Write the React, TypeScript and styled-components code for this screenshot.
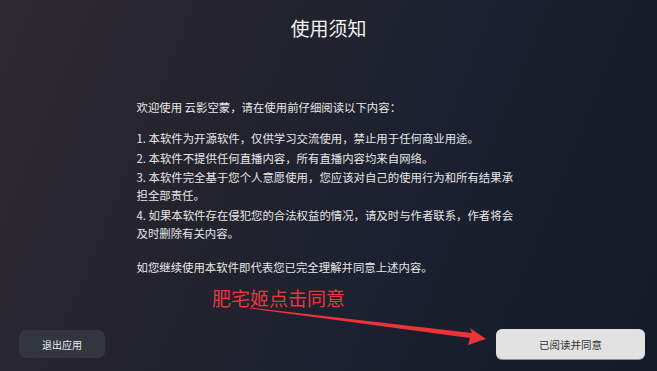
import styled, { createGlobalStyle } from "styled-components";

const GlobalStyle = createGlobalStyle`
  html, body {
    margin: 0;
    padding: 0;
    width: 100%;
    height: 100%;
    overflow: hidden;
  }
  body {
    font-family: "Noto Sans CJK SC", "Noto Sans", sans-serif;
  }
`;

const Screen = styled.div`
  position: relative;
  width: 657px;
  height: 371px;
  display: flex;
  flex-direction: column;
  align-items: center;
  background: linear-gradient(112deg, #2f2a31 0%, #23232d 35%, #1c2030 60%, #131b27 100%);
  overflow: hidden;
`;

const Title = styled.h1`
  margin: 15px 0 0;
  font-size: 19px;
  line-height: 26px;
  font-weight: 400;
  color: #f2f2f2;
`;

const Notice = styled.div`
  width: 384px;
  margin-top: 57px;
  font-size: 11.4px;
  line-height: 18px;
  color: #e6e6e6;
`;

const Paragraph = styled.p<{ $before?: number; $after?: number }>`
  margin: ${(p) => p.$before ?? 0}px 0 ${(p) => p.$after ?? 0}px;
`;

const Item = styled.p`
  margin: 0 0 1.5px;
`;

const Footer = styled.div`
  margin-top: auto;
  align-self: stretch;
  display: flex;
  justify-content: space-between;
  align-items: center;
  padding: 0 12px 12px 19px;
`;

const Button = styled.button<{ $primary?: boolean }>`
  border: none;
  font-family: inherit;
  display: flex;
  align-items: center;
  justify-content: center;
  width: ${(p) => (p.$primary ? 149 : 86)}px;
  height: ${(p) => (p.$primary ? 30 : 28)}px;
  border-radius: ${(p) => (p.$primary ? 6 : 7)}px;
  font-size: ${(p) => (p.$primary ? 10.5 : 10)}px;
  background: ${(p) => (p.$primary ? "#e2e2e2" : "#33363e")};
  color: ${(p) => (p.$primary ? "#333" : "#ececec")};
  box-shadow: ${(p) => (p.$primary ? "0 1px 0 #8a8d93" : "none")};
`;

const Annotation = styled.div`
  position: absolute;
  left: 212px;
  top: 286px;
  font-size: 19px;
  line-height: 24px;
  color: #e8383b;
`;

const ArrowLayer = styled.svg`
  position: absolute;
  left: 0;
  top: 0;
  pointer-events: none;
`;

export default function App() {
  return (
    <>
      <GlobalStyle />
      <Screen>
        <Title>使用须知</Title>
        <Notice>
          <Paragraph $after={13}>欢迎使用 云影空蒙，请在使用前仔细阅读以下内容：</Paragraph>
          <Item>1. 本软件为开源软件，仅供学习交流使用，禁止用于任何商业用途。</Item>
          <Item>2. 本软件不提供任何直播内容，所有直播内容均来自网络。</Item>
          <Item>3. 本软件完全基于您个人意愿使用，您应该对自己的使用行为和所有结果承担全部责任。</Item>
          <Item>4. 如果本软件存在侵犯您的合法权益的情况，请及时与作者联系，作者将会及时删除有关内容。</Item>
          <Paragraph $before={16}>如您继续使用本软件即代表您已完全理解并同意上述内容。</Paragraph>
        </Notice>
        <Footer>
          <Button>退出应用</Button>
          <Button $primary>已阅读并同意</Button>
        </Footer>
        <Annotation>肥宅姬点击同意</Annotation>
        <ArrowLayer width="657" height="371" viewBox="0 0 657 371">
          <polygon
            points="250,307.5 472,333 470,328 486,339 468,345 470,338 250,308.5"
            fill="#ee3338"
          />
        </ArrowLayer>
      </Screen>
    </>
  );
}
